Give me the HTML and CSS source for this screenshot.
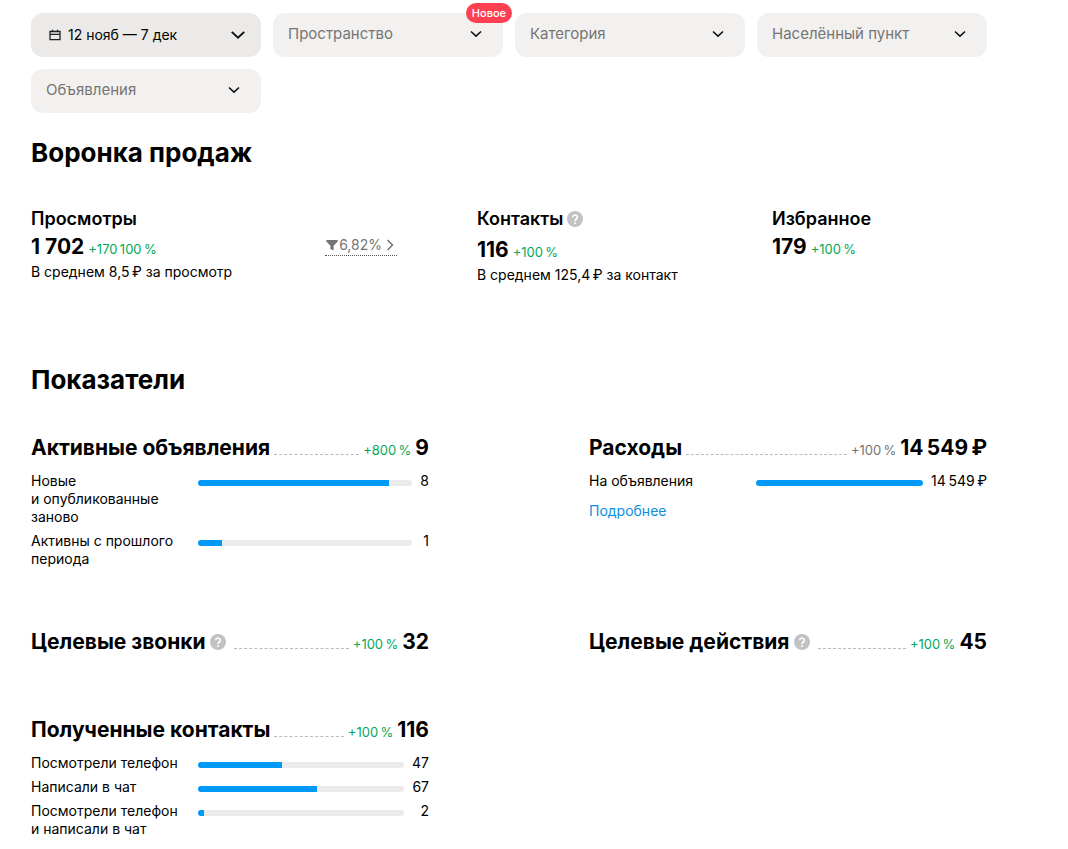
FILE: index.html
```
<!DOCTYPE html>
<html lang="ru">
<head>
    <meta charset="UTF-8">
    <meta name="viewport" content="width=device-width, initial-scale=1.0">
    <title>Статистика</title>
    <link rel="stylesheet" href="styles.css">
</head>
<body>

<svg class="sprite" aria-hidden="true">
    <symbol id="chevron" viewBox="0 0 12 8">
        <path d="M1 1.5l5 4.6 5-4.6" fill="none" stroke="#111" stroke-width="1.6"/>
    </symbol>
    <symbol id="question" viewBox="0 0 16 16">
        <circle cx="8" cy="8" r="8" fill="#c2c2c2"/>
        <path d="M5.7 6.3a2.3 2.3 0 1 1 3.5 2c-.8.5-1.2.8-1.2 1.6" fill="none" stroke="#fff" stroke-width="1.6"/>
        <circle cx="8" cy="12" r="1" fill="#fff"/>
    </symbol>
</svg>

<main class="page">
    <form class="filters">
        <button type="button" class="filter filter-date">
            <svg class="calendar" viewBox="0 0 12 12" aria-hidden="true">
                <path d="M1 2.5h10v8.2H1zM1 5.3h10M3.5 0.8v2.5M8.5 0.8v2.5" fill="none" stroke="#222" stroke-width="1.3"/>
            </svg>
            <span>12 нояб — 7 дек</span>
            <svg class="date-arrow" aria-hidden="true"><use href="#chevron"/></svg>
        </button>
        <div class="filter-box">
            <select class="filter" aria-label="Пространство">
                <option>Пространство</option>
            </select>
            <svg class="arrow" aria-hidden="true"><use href="#chevron"/></svg>
            <span class="badge">Новое</span>
        </div>
        <div class="filter-box">
            <select class="filter" aria-label="Категория">
                <option>Категория</option>
            </select>
            <svg class="arrow" aria-hidden="true"><use href="#chevron"/></svg>
        </div>
        <div class="filter-box">
            <select class="filter" aria-label="Населённый пункт">
                <option>Населённый пункт</option>
            </select>
            <svg class="arrow" aria-hidden="true"><use href="#chevron"/></svg>
        </div>
        <div class="filter-box">
            <select class="filter" aria-label="Объявления">
                <option>Объявления</option>
            </select>
            <svg class="arrow" aria-hidden="true"><use href="#chevron"/></svg>
        </div>
    </form>

    <h1>Воронка продаж</h1>

    <section class="funnel">
        <div class="funnel-step funnel-views">
            <div>
                <h3>Просмотры</h3>
                <div class="total"><b>1 702</b> <span class="delta">+170&thinsp;100&thinsp;%</span></div>
                <div class="note">В среднем 8,5&thinsp;₽ за просмотр</div>
            </div>
            <button type="button" class="conversion">
                <svg class="funnel-icon" viewBox="0 0 12 12" aria-hidden="true">
                    <path d="M0.3 1h11.4v1.6L7.6 6.8V11.4L4.4 10V6.8L0.3 2.6z" fill="#757575"/>
                </svg>
                <span>6,82%</span>
                <svg class="conversion-arrow" viewBox="0 0 8 12" aria-hidden="true">
                    <path d="M1.5 1l5 5-5 5" fill="none" stroke="#757575" stroke-width="1.5"/>
                </svg>
            </button>
        </div>
        <div class="funnel-step">
            <h3 class="with-hint">Контакты <svg class="hint" aria-hidden="true"><use href="#question"/></svg></h3>
            <div class="total"><b>116</b> <span class="delta">+100&thinsp;%</span></div>
            <div class="note">В среднем 125,4&thinsp;₽ за контакт</div>
        </div>
        <div class="funnel-step">
            <h3>Избранное</h3>
            <div class="total"><b>179</b> <span class="delta">+100&thinsp;%</span></div>
        </div>
    </section>

    <h1>Показатели</h1>

    <section class="metrics">
        <article class="metric">
            <div class="metric-head">
                <h2>Активные объявления</h2>
                <span class="dots"></span>
                <span class="delta">+800&thinsp;%</span>
                <b>9</b>
            </div>
            <div class="rows">
                <span>Новые и&nbsp;опубликованные заново</span>
                <div class="bar"><div class="fill" style="width: 89%"></div></div>
                <span class="value">8</span>
                <span>Активны с прошлого периода</span>
                <div class="bar"><div class="fill" style="width: 11%"></div></div>
                <span class="value">1</span>
            </div>
        </article>

        <article class="metric">
            <div class="metric-head">
                <h2>Расходы</h2>
                <span class="dots"></span>
                <span class="delta delta-gray">+100&thinsp;%</span>
                <b>14&thinsp;549&thinsp;₽</b>
            </div>
            <div class="rows">
                <span>На объявления</span>
                <div class="bar"><div class="fill" style="width: 100%"></div></div>
                <span class="value">14&thinsp;549&thinsp;₽</span>
            </div>
            <a class="more" href="#">Подробнее</a>
        </article>

        <article class="metric">
            <div class="metric-head">
                <h2>Целевые звонки</h2>
                <svg class="hint" aria-hidden="true"><use href="#question"/></svg>
                <span class="dots"></span>
                <span class="delta">+100&thinsp;%</span>
                <b>32</b>
            </div>
        </article>

        <article class="metric">
            <div class="metric-head">
                <h2>Целевые действия</h2>
                <svg class="hint" aria-hidden="true"><use href="#question"/></svg>
                <span class="dots"></span>
                <span class="delta">+100&thinsp;%</span>
                <b>45</b>
            </div>
        </article>

        <article class="metric">
            <div class="metric-head">
                <h2>Полученные контакты</h2>
                <span class="dots"></span>
                <span class="delta">+100&thinsp;%</span>
                <b>116</b>
            </div>
            <div class="rows">
                <span>Посмотрели телефон</span>
                <div class="bar"><div class="fill" style="width: 41%"></div></div>
                <span class="value">47</span>
                <span>Написали в чат</span>
                <div class="bar"><div class="fill" style="width: 58%"></div></div>
                <span class="value">67</span>
                <span>Посмотрели телефон и&nbsp;написали в&nbsp;чат</span>
                <div class="bar"><div class="fill" style="width: 3%"></div></div>
                <span class="value">2</span>
            </div>
        </article>
    </section>
</main>

</body>
</html>
```
FILE: styles.css
```
* {
    box-sizing: border-box;
}
body {
    margin: 0;
    background: #fff;
    color: #000;
    font-family: Inter, "Noto Sans", sans-serif;
    font-size: 14px;
    line-height: 18px;
}
.sprite {
    display: none;
}
.page {
    padding: 13px 81px 12px 31px;
}
h1, h2, h3 {
    margin: 0;
}
h1 {
    font-size: 26px;
    line-height: 32px;
    font-weight: 700;
}

/* Filters */
.filters {
    display: grid;
    grid-template-columns: repeat(4, 1fr);
    gap: 12px;
    margin-bottom: 24px;
}
.filter-box {
    position: relative;
}
.filter {
    appearance: none;
    display: block;
    width: 100%;
    height: 44px;
    padding: 0 40px 3px 15px;
    border: 0;
    border-radius: 12px;
    background: #f2f1f0;
    color: #757575;
    font-family: inherit;
    font-size: 15px;
}
.filter-date {
    display: flex;
    align-items: center;
    gap: 7px;
    padding: 0 15px 1px 18px;
    background: #ebeae8;
    color: #000;
    font-size: 14px;
}
.calendar {
    width: 12px;
    height: 12px;
}
.date-arrow {
    width: 16px;
    height: 10px;
    margin-left: auto;
}
.arrow {
    position: absolute;
    top: 17px;
    right: 21px;
    width: 12px;
    height: 8px;
    pointer-events: none;
}
.badge {
    position: absolute;
    top: -10px;
    right: -9px;
    padding: 1px 6px;
    border-radius: 10px;
    background: #ff4053;
    color: #fff;
    font-size: 11px;
    font-weight: 500;
}

/* Funnel */
.funnel {
    display: grid;
    grid-template-columns: 446fr 295fr 215fr;
    margin: 38px 0 80px;
}
.funnel-views {
    display: flex;
    justify-content: space-between;
    align-items: flex-start;
    padding-right: 80px;
}
h3 {
    font-size: 18px;
    line-height: 24px;
    font-weight: 600;
}
.with-hint {
    display: flex;
    align-items: center;
    gap: 4px;
    padding-bottom: 3px;
}
.hint {
    flex: none;
    width: 16px;
    height: 16px;
}
.total {
    padding-top: 2px;
    line-height: 28px;
}
.total b {
    font-size: 21px;
}
.delta {
    color: #02a958;
    font-size: 13px;
    white-space: nowrap;
}
.delta-gray {
    color: #757575;
}
.conversion {
    display: flex;
    align-items: center;
    gap: 1px;
    margin-top: 28px;
    padding: 0 3px 0 1px;
    border: 0;
    border-bottom: 1px dotted #555;
    background: none;
    color: #757575;
    font-family: inherit;
    font-size: 14px;
    line-height: 20px;
}
.funnel-icon {
    width: 12px;
    height: 12px;
}
.conversion-arrow {
    width: 8px;
    height: 12px;
    margin-left: 3px;
}

/* Metrics */
.metrics {
    display: grid;
    grid-template-columns: 1fr 1fr;
    gap: 60px 160px;
    margin-top: 38px;
}
.metric-head {
    display: flex;
    align-items: baseline;
    gap: 4px;
}
.metric-head h2, .metric-head b {
    font-size: 21px;
    line-height: 28px;
    font-weight: 700;
    white-space: nowrap;
}
.metric-head .hint {
    align-self: center;
    margin-right: 4px;
}
.dots {
    flex: 1;
    border-bottom: 1px dashed #bbb;
}
.rows {
    display: grid;
    grid-template-columns: 150px 1fr auto;
    gap: 6px 0;
    margin-top: 10px;
}
.bar {
    height: 6px;
    margin: 8px 8px 0 17px;
    border-radius: 3px;
    background: #ebebeb;
    overflow: hidden;
}
.fill {
    height: 100%;
    background: #0099f7;
}
.value {
    text-align: right;
    white-space: nowrap;
}
.more {
    display: inline-block;
    margin-top: 12px;
    color: #0a8fe0;
    text-decoration: none;
}
```
